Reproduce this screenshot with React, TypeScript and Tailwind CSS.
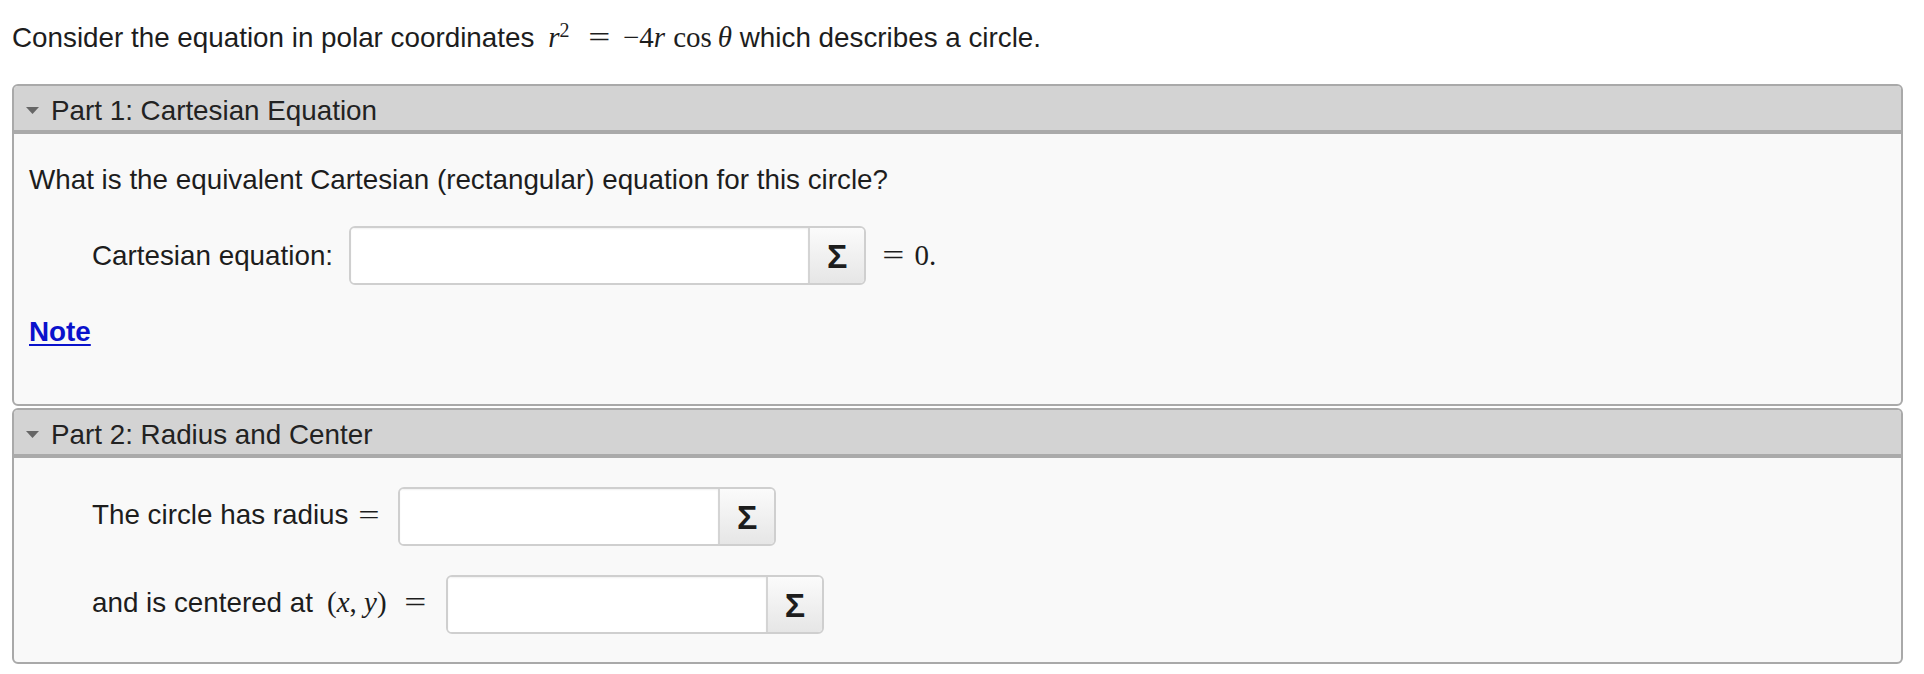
import React from 'react';

const sans = { fontFamily: '"Liberation Sans", Arial, Helvetica, sans-serif' };
const serif = { fontFamily: '"Liberation Serif", "Times New Roman", serif' };

// Small disclosure triangle used in the part headers
const Caret = () => (
  <svg width="13" height="7" viewBox="0 0 13 7" className="shrink-0">
    <path d="M0 0 H13 L6.5 7 Z" fill="#666" />
  </svg>
);

// TeX-style wide equals sign
const Eq = ({ className }: { className?: string }) => (
  <span className={`inline-block scale-x-[1.35] ${className ?? ''}`}>=</span>
);

interface AnswerBoxProps {
  fieldWidth: string;
}

// Text field with the Σ equation-editor button on its right
const AnswerBox = ({ fieldWidth }: AnswerBoxProps) => (
  <div className="flex h-[59px] rounded-md border-2 border-[#cfcfcf] overflow-hidden bg-white shrink-0">
    <div className={`${fieldWidth} h-full bg-white shadow-[inset_0_1px_2px_rgba(0,0,0,0.06)]`} />
    <div className="w-[56px] h-full flex items-center justify-center border-l-2 border-[#d4d4d4] bg-linear-to-b from-[#fbfbfb] to-[#e6e6e6]">
      <span className="text-[34px] font-bold text-[#1d1d1d] leading-none" style={sans}>
        Σ
      </span>
    </div>
  </div>
);

interface PartProps {
  title: string;
  children: React.ReactNode;
  className?: string;
}

const Part = ({ title, children, className }: PartProps) => (
  <div className={`rounded-md border-2 border-[#a9a9a9] bg-[#f9f9f9] overflow-hidden ${className ?? ''}`}>
    <div className="flex items-center gap-[12px] pl-[12px] pt-[9px] pb-[4px] bg-[#d3d3d3] border-b-4 border-[#aaaaaa]">
      <Caret />
      <span className="text-[27.8px] leading-[31px] text-[#222]">{title}</span>
    </div>
    {children}
  </div>
);

const App = () => {
  return (
    <div className="min-h-screen bg-white text-[#1d1d1d] pl-[12px] pr-[21px]" style={sans}>
      {/* Problem statement */}
      <p className="mt-[20px] h-[34px] leading-[34px] text-[27.8px] whitespace-nowrap">
        Consider the equation in polar coordinates
        <span style={serif} className="text-[29px] ml-[14px]">
          <i>r</i>
          <span className="relative -top-[10px] text-[20px]">2</span>
          <Eq className="ml-[21px] mr-[16px]" />
          <span>−4</span>
          <i>r</i>
          <span className="ml-[8px]">cos</span>
          <i className="ml-[6px]">θ</i>
        </span>{' '}
        which describes a circle.
      </p>

      {/* Part 1 */}
      <Part title="Part 1: Cartesian Equation" className="mt-[30px]">
        <div className="pl-[15px] pt-[30px] pb-[56px] text-[27.8px]">
          <p className="leading-[32px]">What is the equivalent Cartesian (rectangular) equation for this circle?</p>

          <div className="flex items-center mt-[30px] ml-[63px]">
            <span className="leading-[32px]">Cartesian equation:</span>
            <div className="ml-[16px]">
              <AnswerBox fieldWidth="w-[457px]" />
            </div>
            <span className="ml-[19px] text-[29px]" style={serif}>
              <Eq />
              <span className="ml-[13px]">0.</span>
            </span>
          </div>

          <a href="#" className="block w-fit mt-[31px] leading-[32px] font-bold text-[#0a12cc] underline underline-offset-[3px]">
            Note
          </a>
        </div>
      </Part>

      {/* Part 2 */}
      <Part title="Part 2: Radius and Center" className="mt-[2px]">
        <div className="pl-[78px] pt-[29px] pb-[28px] text-[27.8px] flex flex-col gap-[29px]">
          <div className="flex items-center">
            <span className="leading-[32px] -translate-y-[2px]">
              The circle has radius
              <span style={serif} className="ml-[13px] text-[28px]">
                <Eq />
              </span>
            </span>
            <div className="ml-[21px]">
              <AnswerBox fieldWidth="w-[318px]" />
            </div>
          </div>

          <div className="flex items-center">
            <span className="leading-[32px] -translate-y-[2px]">
              and is centered at
              <span style={serif} className="ml-[14px] text-[29px]">
                (<i>x</i>, <i>y</i>)
                <Eq className="ml-[20px]" />
              </span>
            </span>
            <div className="ml-[23px]">
              <AnswerBox fieldWidth="w-[318px]" />
            </div>
          </div>
        </div>
      </Part>
    </div>
  );
};

export default App;
